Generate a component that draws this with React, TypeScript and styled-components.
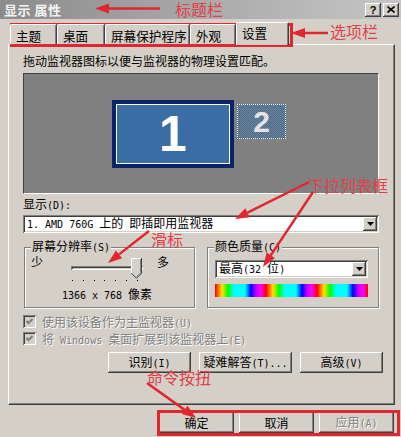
import styled, { createGlobalStyle, css } from "styled-components";

const RED = "#e2262f";

const GlobalStyle = createGlobalStyle`
  html, body {
    margin: 0;
    padding: 0;
    background: #d4d0c8;
  }
  body {
    font-family: "Noto Sans CJK SC", "Liberation Sans", sans-serif;
    font-size: 12px;
    color: #000;
  }
`;

// classic 3D edges
const raised = css`
  box-shadow: inset -1px -1px #404040, inset 1px 1px #fff,
    inset -2px -2px #808080, inset 2px 2px #d4d0c8;
`;

const sunken = css`
  box-shadow: inset 1px 1px #808080, inset -1px -1px #fff,
    inset 2px 2px #404040, inset -2px -2px #d4d0c8;
`;

const Window = styled.div`
  position: relative;
  width: 401px;
  height: 437px;
  overflow: hidden;
  background: #d4d0c8;
  display: flex;
  flex-direction: column;
`;

const TitleBar = styled.div`
  height: 19px;
  flex-shrink: 0;
  display: flex;
  align-items: center;
  gap: 2px;
  padding: 0 2px 0 4px;
  background: linear-gradient(90deg, #8c8c8c, #c6c6c6);
`;

const Caption = styled.span`
  flex: 1;
  color: #f4f4f4;
  font-weight: bold;
  font-size: 13px;
  line-height: 19px;
  letter-spacing: 0.5px;
`;

const CapButton = styled.span`
  width: 16px;
  height: 14px;
  box-sizing: border-box;
  background: #d4d0c8;
  ${raised}
  display: flex;
  align-items: center;
  justify-content: center;
  font: bold 11px "Liberation Sans", sans-serif;
`;

const Body = styled.div`
  flex: 1;
  display: flex;
  flex-direction: column;
  padding: 3px 6px 0 8px;
`;

const TabStrip = styled.div`
  position: relative;
  z-index: 1;
  height: 22px;
  display: flex;
  align-items: flex-end;
  padding-left: 2px;
`;

const Tab = styled.div<{ $w: number; $active?: boolean }>`
  width: ${(p) => p.$w}px;
  height: ${(p) => (p.$active ? 23 : 20)}px;
  margin-bottom: ${(p) => (p.$active ? -1 : 0)}px;
  box-sizing: border-box;
  padding: ${(p) => (p.$active ? "2px" : "3px")} 0 0 5px;
  font-size: 12.6px;
  line-height: 16px;
  white-space: nowrap;
  overflow: hidden;
  background: #d4d0c8;
  border-top: 1px solid #fff;
  border-left: 1px solid #fff;
  border-right: 1px solid #404040;
  border-radius: 2px 2px 0 0;
  box-shadow: inset -1px 0 #808080;
`;

const Panel = styled.div`
  height: 361px;
  box-sizing: border-box;
  border-top: 1px solid #fff;
  border-left: 1px solid #fff;
  border-right: 1px solid #404040;
  border-bottom: 1px solid #404040;
  box-shadow: inset -1px -1px #808080;
  padding: 9px 15px 0 14px;
  display: flex;
  flex-direction: column;
`;

const Line = styled.div`
  line-height: 14px;
  white-space: nowrap;
`;

const Desk = styled.div`
  margin-top: 5px;
  height: 121px;
  box-sizing: border-box;
  background: #808080;
  border-top: 1px solid #404040;
  border-left: 1px solid #404040;
  border-right: 1px solid #fff;
  border-bottom: 1px solid #fff;
  display: flex;
  align-items: center;
  justify-content: center;
  gap: 3px;
  padding-right: 4px;
`;

const Screen = styled.div<{ $primary?: boolean }>`
  box-sizing: border-box;
  display: flex;
  align-items: center;
  justify-content: center;
  font-family: "Liberation Sans", sans-serif;
  font-weight: bold;
  ${(p) =>
    p.$primary
      ? css`
          width: 122px;
          height: 68px;
          border: 4px solid #0a246a;
          box-shadow: inset 0 0 0 1px #fff;
          background: #3a6ea5;
          color: #fff;
          font-size: 50px;
        `
      : css`
          width: 49px;
          height: 35px;
          align-self: flex-start;
          margin-top: 30px;
          border: 1px dotted #fff;
          background: repeating-conic-gradient(#3a6ea5 0 25%, #808080 0 50%) 0 0 / 2px 2px;
          color: #e4e4e4;
          font-size: 30px;
        `}
`;

const Select = styled.div<{ $w?: number }>`
  height: 18px;
  width: ${(p) => (p.$w ? `${p.$w}px` : "auto")};
  box-sizing: border-box;
  background: #fff;
  ${sunken}
  display: flex;
  align-items: center;
  padding: 2px 2px 2px 4px;
`;

const SelectText = styled.span`
  flex: 1;
  white-space: nowrap;
  line-height: 14px;
`;

const DropButton = styled.span`
  width: 14px;
  height: 14px;
  box-sizing: border-box;
  background: #d4d0c8;
  ${raised}
  display: flex;
  align-items: center;
  justify-content: center;
`;

const Groups = styled.div`
  margin-top: 6px;
  padding-left: 1px;
  display: grid;
  grid-template-columns: 171px 172px;
  column-gap: 12px;
`;

const Group = styled.fieldset`
  margin: 0;
  min-width: 0;
  padding: 0 6px 4px;
  border: 1px solid #808080;
  box-shadow: 1px 1px 0 #fff, inset 1px 1px 0 #fff;
`;

const Legend = styled.legend`
  padding: 0 1px;
  background: #d4d0c8;
  line-height: 14px;
  white-space: nowrap;
`;

const ResRow = styled.div`
  display: grid;
  grid-template-columns: 40px 72px 1fr;
  align-items: start;
  line-height: 14px;
`;

const More = styled.span`
  padding-left: 14px;
`;

const SliderCol = styled.div`
  display: flex;
  flex-direction: column;
  align-items: center;
`;

const Slider = styled.div`
  position: relative;
  width: 72px;
  height: 24px;
`;

const Track = styled.div`
  margin-top: 11px;
  height: 4px;
  ${sunken}
`;

const Thumb = styled.svg`
  position: absolute;
  right: 1px;
  top: 3px;
`;

const Ticks = styled.div`
  align-self: flex-start;
  margin: 1px 0 0 1px;
  width: 66px;
  height: 1px;
  display: flex;
  justify-content: space-between;
`;

const Tick = styled.i`
  width: 1px;
  height: 1px;
  background: #000;
`;

const Value = styled.div`
  margin-top: 6px;
  line-height: 14px;
  white-space: nowrap;
`;

const ColorBox = styled.div`
  padding: 5px 0 0 1px;
`;

const Spectrum = styled.div`
  margin-top: 6px;
  width: 153px;
  height: 13px;
  background: repeating-linear-gradient(
    90deg,
    #ff0000 0px,
    #ffe000 7px,
    #00ff00 13px,
    #00ffff 19px,
    #00ffff 30px,
    #0000ff 36px,
    #c000ff 41px,
    #ff00ff 46px,
    #ff0000 51px
  );
`;

const Checks = styled.div`
  margin-top: 5px;
`;

const CheckRow = styled.div`
  height: 17px;
  display: flex;
  align-items: center;
  gap: 6px;
  color: #808080;
  text-shadow: 1px 1px #fff;
  white-space: nowrap;
`;

const CheckBox = styled.span`
  width: 13px;
  height: 13px;
  box-sizing: border-box;
  background: #d4d0c8;
  ${sunken}
  display: flex;
  align-items: center;
  justify-content: center;
`;

const ButtonRow = styled.div`
  margin: 5px -4px 0 0;
  display: flex;
  justify-content: flex-end;
  gap: 8px;
`;

const Button = styled.button<{ $w: number }>`
  width: ${(p) => p.$w}px;
  height: 21px;
  padding: 0;
  border: none;
  background: #d4d0c8;
  ${raised}
  font-family: inherit;
  font-size: 12px;
  line-height: 14px;
  color: #000;
  white-space: nowrap;
  &:disabled {
    color: #808080;
    text-shadow: 1px 1px #fff;
  }
`;

const Footer = styled.div`
  padding: 7px 1px 0 0;
  display: flex;
  justify-content: flex-end;
  gap: 5px;
`;

// callouts drawn on top of the dialog
const Overlay = styled.div`
  position: absolute;
  inset: 0;
  pointer-events: none;
`;

const Note = styled.span<{ $x: number; $y: number }>`
  position: absolute;
  left: ${(p) => p.$x}px;
  top: ${(p) => p.$y}px;
  color: #e0404a;
  font-size: 16px;
  line-height: 16px;
  white-space: nowrap;
`;

const Marks = styled.svg`
  position: absolute;
  left: 0;
  top: 0;
`;

const Half = styled.span`
  font-family: "DejaVu Sans Mono", "Liberation Mono", monospace;
  font-size: 10px;
`;

// half-width latin runs are set in a narrow mono face, like the system font
function T({ s }: { s: string }) {
  return (
    <>
      {s.split(/([\x00-\xff]+)/).map((part, i) =>
        /[\x00-\xff]/.test(part) ? <Half key={i}>{part}</Half> : part
      )}
    </>
  );
}

function Arrow({ from, to }: { from: [number, number]; to: [number, number] }) {
  const [x1, y1] = from;
  const [x2, y2] = to;
  const len = Math.hypot(x2 - x1, y2 - y1);
  const ux = (x2 - x1) / len;
  const uy = (y2 - y1) / len;
  const bx = x2 - ux * 14;
  const by = y2 - uy * 14;
  const px = -uy * 5;
  const py = ux * 5;
  return (
    <g>
      <line x1={x1} y1={y1} x2={bx} y2={by} stroke={RED} strokeWidth={2.5} />
      <polygon
        points={`${x2},${y2} ${bx + px},${by + py} ${bx - px},${by - py}`}
        fill={RED}
      />
    </g>
  );
}

const DownTriangle = () => (
  <svg width="7" height="4" viewBox="0 0 7 4">
    <polygon points="0,0 7,0 3.5,4" fill="#000" />
  </svg>
);

const Check = () => (
  <svg width="7" height="7" viewBox="0 0 7 7">
    <polyline points="0.5,3 2.5,5 6.5,1" fill="none" stroke="#808080" strokeWidth="2" />
  </svg>
);

const tabs = [
  { label: "主题", w: 47 },
  { label: "桌面", w: 48 },
  { label: "屏幕保护程序", w: 85 },
  { label: "外观", w: 46 },
  { label: "设置", w: 53, active: true },
];

export default function App() {
  return (
    <>
      <GlobalStyle />
      <Window>
        <TitleBar>
          <Caption>显示 属性</Caption>
          <CapButton>?</CapButton>
          <CapButton>
            <svg width="8" height="7" viewBox="0 0 8 7">
              <path d="M0.5 0.5 L7.5 6.5 M7.5 0.5 L0.5 6.5" stroke="#000" strokeWidth="1.6" />
            </svg>
          </CapButton>
        </TitleBar>

        <Body>
          <TabStrip>
            {tabs.map((t) => (
              <Tab key={t.label} $w={t.w} $active={t.active}>
                {t.label}
              </Tab>
            ))}
          </TabStrip>

          <Panel>
            <Line>拖动监视器图标以便与监视器的物理设置匹配。</Line>
            <Desk>
              <Screen $primary>1</Screen>
              <Screen>2</Screen>
            </Desk>

            <Line style={{ marginTop: 3 }}>
              <T s="显示(D):" />
            </Line>
            <Select style={{ marginTop: 2 }}>
              <SelectText>
                <T s="1. AMD 760G 上的 即插即用监视器" />
              </SelectText>
              <DropButton>
                <DownTriangle />
              </DropButton>
            </Select>

            <Groups>
              <Group>
                <Legend>
                  <T s="屏幕分辨率(S)" />
                </Legend>
                <ResRow>
                  <span>少</span>
                  <SliderCol>
                    <Slider>
                      <Track />
                      <Thumb width="11" height="21" viewBox="0 0 11 21">
                        <polygon points="0,0 11,0 11,15 5.5,20.5 0,15" fill="#d4d0c8" />
                        <polyline points="0.5,15 0.5,0.5 10,0.5" fill="none" stroke="#fff" />
                        <polyline points="10.5,0 10.5,15.3 5.5,20.3 0.3,15.1" fill="none" stroke="#404040" />
                        <polyline points="9.5,1 9.5,14.8 5.5,18.8" fill="none" stroke="#808080" />
                      </Thumb>
                    </Slider>
                    <Ticks>
                      {Array.from({ length: 7 }, (_, i) => (
                        <Tick key={i} />
                      ))}
                    </Ticks>
                    <Value>
                      <T s="1366 x 768 像素" />
                    </Value>
                  </SliderCol>
                  <More>多</More>
                </ResRow>
              </Group>

              <Group>
                <Legend>
                  <T s="颜色质量(C)" />
                </Legend>
                <ColorBox>
                  <Select $w={153}>
                    <SelectText>
                      <T s="最高(32 位)" />
                    </SelectText>
                    <DropButton>
                      <DownTriangle />
                    </DropButton>
                  </Select>
                  <Spectrum />
                </ColorBox>
              </Group>
            </Groups>

            <Checks>
              <CheckRow>
                <CheckBox>
                  <Check />
                </CheckBox>
                <span>
                  <T s="使用该设备作为主监视器(U)" />
                </span>
              </CheckRow>
              <CheckRow>
                <CheckBox>
                  <Check />
                </CheckBox>
                <span>
                  <T s="将 Windows 桌面扩展到该监视器上(E)" />
                </span>
              </CheckRow>
            </Checks>

            <ButtonRow>
              <Button $w={83}>
                <T s="识别(I)" />
              </Button>
              <Button $w={93}>
                <T s="疑难解答(T)..." />
              </Button>
              <Button $w={83}>
                <T s="高级(V)" />
              </Button>
            </ButtonRow>
          </Panel>

          <Footer>
            <Button $w={75}>确定</Button>
            <Button $w={75}>取消</Button>
            <Button $w={75} disabled>
              <T s="应用(A)" />
            </Button>
          </Footer>
        </Body>

        <Overlay>
          <Marks width="401" height="437" viewBox="0 0 401 437">
            <rect x="11.5" y="24.5" width="280" height="21" fill="none" stroke={RED} strokeWidth="3" />
            <rect x="158.5" y="411.5" width="240" height="23" fill="none" stroke={RED} strokeWidth="3" />
            <Arrow from={[160, 8.5]} to={[95, 8.5]} />
            <Arrow from={[328, 33]} to={[291, 33]} />
            <Arrow from={[309, 182]} to={[235, 219]} />
            <Arrow from={[313, 192]} to={[263, 267]} />
            <Arrow from={[149, 231]} to={[108, 263]} />
            <Arrow from={[147, 383]} to={[196, 418]} />
          </Marks>
          <Note $x={175} $y={1}>标题栏</Note>
          <Note $x={330} $y={23}>选项栏</Note>
          <Note $x={308} $y={177}>下拉列表框</Note>
          <Note $x={151} $y={231}>滑标</Note>
          <Note $x={147} $y={369}>命令按扭</Note>
        </Overlay>
      </Window>
    </>
  );
}
